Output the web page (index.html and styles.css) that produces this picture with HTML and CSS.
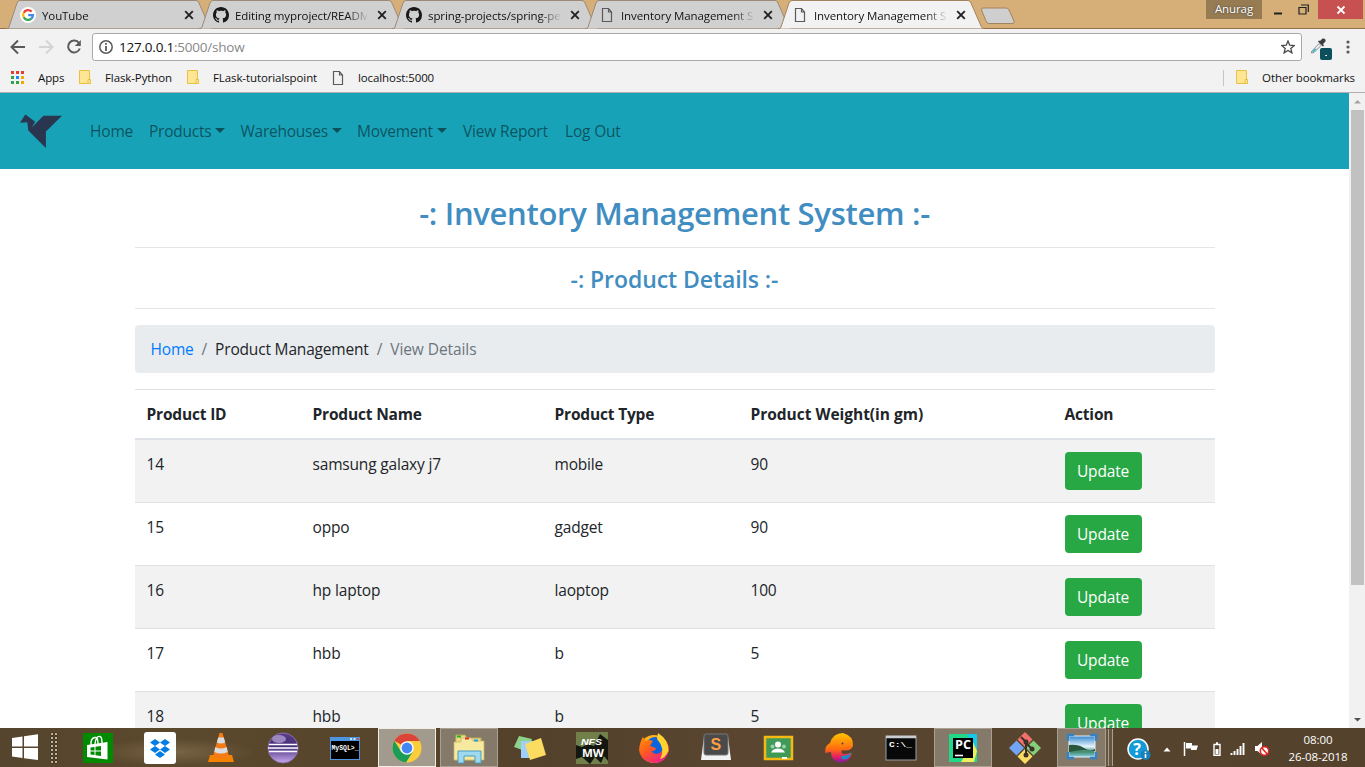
FILE: index.html
```html
<!DOCTYPE html>
<html lang="en">
<head>
<meta charset="utf-8">
<title>Inventory Management System</title>
<link rel="stylesheet" href="styles.css">
</head>
<body>
<svg class="defs" width="0" height="0">
  <defs>
    <symbol id="tabshape" viewBox="0 0 208 29"><path d="M0 28.5 H1 Q2.500 28.500 3 27 L11 3 Q12 .5 14 .5 H190 Q192 .5 193 3 L203 26 Q204 28.500 206 28.500"/></symbol>
    <symbol id="close" viewBox="0 0 10 10"><path d="M1.200 1.200 8.800 8.800 M8.800 1.200 1.200 8.800" fill="none" stroke="currentColor" stroke-width="1.900"/></symbol>
    <symbol id="page" viewBox="0 0 16 16"><path d="M3.500 1.500 H9.500 L12.500 5 V14.500 H3.500Z M9.500 1.500 V5 H12.500" fill="none" stroke="#5a5a5a" stroke-width="1.200"/></symbol>
    <symbol id="github" viewBox="0 0 16 16"><path fill="#191717" d="M8 0C3.580 0 0 3.580 0 8c0 3.540 2.290 6.530 5.470 7.590.4.070.55-.17.55-.38 0-.19-.01-.82-.01-1.490-2.010.37-2.530-.49-2.690-.94-.09-.23-.48-.94-.82-1.130-.28-.15-.68-.52-.01-.53.63-.01 1.080.58 1.230.82.72 1.210 1.870.87 2.330.66.070-.52.28-.87.51-1.070-1.780-.2-3.640-.89-3.640-3.950 0-.87.31-1.590.82-2.150-.08-.2-.36-1.020.08-2.120 0 0 .67-.21 2.200.82.64-.18 1.320-.27 2-.27s1.360.090 2 .27c1.530-1.040 2.200-.82 2.200-.82.44 1.100.16 1.920.08 2.120.51.56.82 1.270.82 2.150 0 3.070-1.870 3.750-3.650 3.950.29.25.54.73.54 1.480 0 1.070-.01 1.930-.01 2.200 0 .21.15.46.55.38A8.010 8.010 0 0 0 16 8c0-4.420-3.580-8-8-8z"/></symbol>
    <symbol id="folder" viewBox="0 0 13 15"><path d="M.5 .5H10.500V9.500H11.500V13.500H.5Z" fill="#ffe694" stroke="#e8c143"/><path d="M9 13.500V9.500H11.500" fill="none" stroke="#e8c143"/></symbol>
    <linearGradient id="purple" x2="0" y2="1"><stop stop-color="#5a3a85"/><stop offset=".45" stop-color="#47307a"/><stop offset="1" stop-color="#c9aaf0"/></linearGradient>
    <linearGradient id="fox" x2=".7" y2="1"><stop stop-color="#ff9a00"/><stop offset=".5" stop-color="#ff5a1f"/><stop offset="1" stop-color="#f01d8d"/></linearGradient>
    <linearGradient id="bow" x2="0" y2="1"><stop stop-color="#ffc400"/><stop offset=".55" stop-color="#ff6a10"/><stop offset=".8" stop-color="#e91e63"/><stop offset="1" stop-color="#7b1fa2"/></linearGradient>
    <linearGradient id="sky" x2="0" y2="1"><stop stop-color="#3585d0"/><stop offset=".5" stop-color="#e6f5fc"/><stop offset=".55" stop-color="#c5e3ec"/><stop offset=".75" stop-color="#3f8a68"/><stop offset="1" stop-color="#89cfe8"/></linearGradient>
  </defs>
</svg>

<div class="screen">
  <header class="tabstrip">
    <div class="tabs">
      <div class="tab"><svg class="shape"><use href="#tabshape"/></svg>
        <svg class="fav" viewBox="0 0 16 16"><circle cx="8" cy="8" r="8" fill="#fff"/><g fill="none" stroke-width="2.300"><path d="M11.600 4.600A4.900 4.900 0 0 0 3.700 5.700" stroke="#ea4335"/><path d="M3.700 5.700A4.900 4.900 0 0 0 3.700 10.300" stroke="#fbbc05"/><path d="M3.700 10.300A4.900 4.900 0 0 0 11.300 11.600" stroke="#34a853"/><path d="M11.300 11.600A4.900 4.900 0 0 0 12.900 8.100H8.200" stroke="#4285f4"/></g></svg>
        <span class="tab-title">YouTube</span><svg class="x"><use href="#close"/></svg></div>
      <div class="tab"><svg class="shape"><use href="#tabshape"/></svg><svg class="fav"><use href="#github"/></svg><span class="tab-title">Editing myproject/README</span><svg class="x"><use href="#close"/></svg></div>
      <div class="tab"><svg class="shape"><use href="#tabshape"/></svg><svg class="fav"><use href="#github"/></svg><span class="tab-title">spring-projects/spring-pet</span><svg class="x"><use href="#close"/></svg></div>
      <div class="tab"><svg class="shape"><use href="#tabshape"/></svg><svg class="fav"><use href="#page"/></svg><span class="tab-title">Inventory Management S</span><svg class="x"><use href="#close"/></svg></div>
      <div class="tab active"><svg class="shape"><use href="#tabshape"/></svg><svg class="fav"><use href="#page"/></svg><span class="tab-title">Inventory Management S</span><svg class="x"><use href="#close"/></svg></div>
    </div>
    <svg class="newtab" viewBox="0 0 36 18"><path d="M3 1H26Q28 1 29 3L34 14Q35 16.500 32 16.500H9Q7 16.500 6 14L1.500 3Q1 1 3 1Z" fill="#cfcfcf" stroke="#a3845f"/></svg>
    <div class="win">
      <span class="user">Anurag</span>
      <svg class="min" viewBox="0 0 10 10"><path d="M0 7.500H8" stroke="#222" stroke-width="2"/></svg>
      <svg class="max" viewBox="0 0 11 11"><path d="M1 3.500H8V10H1Z M3 1H10.300V8" fill="none" stroke="#222" stroke-width="1.200"/></svg>
      <span class="winclose"><svg viewBox="0 0 10 10"><path d="M1.500 1.500 8.500 8.500M8.500 1.500 1.500 8.500" stroke="#fff" stroke-width="1.800"/></svg></span>
    </div>
  </header>

  <div class="toolbar">
    <svg class="tool" viewBox="0 0 16 16"><path d="M15 8H2M8 1.500 1.500 8 8 14.500" fill="none" stroke="#5a5a5a" stroke-width="2"/></svg>
    <svg class="tool" viewBox="0 0 16 16"><path d="M1 8H14M8 1.500 14.500 8 8 14.500" fill="none" stroke="#d4d4d4" stroke-width="2"/></svg>
    <svg class="tool" viewBox="0 0 16 16"><path d="M13 4A6 6 0 1 0 13.800 9.500" fill="none" stroke="#5a5a5a" stroke-width="2"/><path d="M14.800 1V7H8.800Z" fill="#5a5a5a"/></svg>
    <div class="omnibox">
      <svg class="info" viewBox="0 0 14 14"><circle cx="7" cy="7" r="6.200" fill="none" stroke="#5a5a5a" stroke-width="1.500"/><path d="M7 6V11M7 3V4.800" stroke="#5a5a5a" stroke-width="1.800"/></svg>
      <span class="url">127.0.0.1<i>:5000/show</i></span>
      <svg class="star" viewBox="0 0 14 14"><path d="M7 1 8.700 5.200 13.200 5.500 9.800 8.400 10.900 12.900 7 10.400 3.100 12.900 4.200 8.400.8 5.500 5.300 5.200Z" fill="none" stroke="#4a4a4a" stroke-width="1.300"/></svg>
    </div>
    <svg class="picker" viewBox="0 0 22 22"><path d="M1.500 13.500 9 5.500 11 7.500 4 14.500 1.500 15Z" fill="#e8f2f2" stroke="#667" stroke-width=".7"/><path d="M2 13.500 5 10.500 7 11 3.500 14.500Z" fill="#41bccb"/><path d="M8 3.500 13 8.500 14 7.500 13 6 15.500 3.500Q16 0 12.500 .5L10 3 9 2.500Z" fill="#3d3d3d"/><rect x="10" y="10" width="12" height="12" rx="2" fill="#0d4f5c"/><path d="M15.300 17.500H17" stroke="#fff"/></svg>
    <svg class="kebab" viewBox="0 0 4 14"><g fill="#5a5a5a"><circle cx="2" cy="2" r="1.600"/><circle cx="2" cy="7" r="1.600"/><circle cx="2" cy="12" r="1.600"/></g></svg>
  </div>

  <div class="bookmarks">
    <svg class="apps" viewBox="0 0 13 13"><g><path d="M0 0h3v3h-3zM5 0h3v3h-3zM10 0h3v3h-3z" fill="#ea3b30"/><path d="M0 5h3v3h-3zM0 10h3v3h-3zM5 10h3v3h-3z" fill="#2da44e"/><path d="M5 5h3v3h-3z" fill="#1e88f7"/><path d="M10 5h3v3h-3zM10 10h3v3h-3z" fill="#f5a800"/></g></svg>
    <span class="bm b1">Apps</span>
    <svg class="fold"><use href="#folder"/></svg><span class="bm b2">Flask-Python</span>
    <svg class="fold"><use href="#folder"/></svg><span class="bm b3">FLask-tutorialspoint</span>
    <svg class="pg"><use href="#page"/></svg><span class="bm b4">localhost:5000</span>
    <span class="sep"></span>
    <svg class="fold"><use href="#folder"/></svg><span class="bm b5">Other bookmarks</span>
  </div>

  <div class="viewport">
    <div class="page">
      <nav class="navbar">
        <svg class="bird" viewBox="0 0 44 36"><path d="M0 9.500 5.500 1 15.500 8.500 12 14.500 24 2.500H43L26.500 18.500V35.500L8.500 17.500 7.500 9Z" fill="#2a3550"/></svg>
        <a class="n1">Home</a><a class="n2">Products<b class="caret"></b></a><a class="n3">Warehouses<b class="caret"></b></a><a class="n4">Movement<b class="caret"></b></a><a class="n5">View Report</a><a class="n6">Log Out</a>
      </nav>
      <main class="container">
        <h2>-: Inventory Management System :-</h2>
        <hr>
        <h4>-: Product Details :-</h4>
        <hr>
        <div class="breadcrumb"><a>Home</a><i>/</i><span>Product Management</span><i>/</i><em>View Details</em></div>
        <div class="table">
          <div class="tr th"><span>Product ID</span><span>Product Name</span><span>Product Type</span><span class="wide">Product Weight(in gm)</span><span>Action</span></div>
          <div class="tr odd"><span>14</span><span>samsung galaxy j7</span><span>mobile</span><span>90</span><span><button class="btn">Update</button></span></div>
          <div class="tr"><span>15</span><span>oppo</span><span>gadget</span><span>90</span><span><button class="btn">Update</button></span></div>
          <div class="tr odd"><span>16</span><span>hp laptop</span><span>laoptop</span><span>100</span><span><button class="btn">Update</button></span></div>
          <div class="tr"><span>17</span><span>hbb</span><span>b</span><span>5</span><span><button class="btn">Update</button></span></div>
          <div class="tr odd"><span>18</span><span>hbb</span><span>b</span><span>5</span><span><button class="btn">Update</button></span></div>
        </div>
      </main>
    </div>
    <div class="scrollbar">
      <svg viewBox="0 0 17 17"><path d="M5 10.500 8.500 7 12 10.500Z" fill="#a3a3a3"/></svg>
      <div class="thumb"></div>
      <svg class="down" viewBox="0 0 17 17"><path d="M5 7 8.500 10.500 12 7Z" fill="#505050"/></svg>
    </div>
  </div>

  <footer class="taskbar">
    <div class="start"><svg viewBox="0 0 28 26"><path d="M1 4 11.500 2.500V12.500H1ZM13 2.300 27 .3V12.500H13ZM1 14H11.500V24L1 22.500ZM13 14H27V26L13 24.200Z" fill="#fff"/></svg></div>
    <div class="grip"></div>
    <div class="apps-row">
      <div class="cell"><svg viewBox="0 0 32 32"><rect x="1" y="1" width="30" height="30" fill="#008a00"/><path d="M5 13 25.500 10V27.500L5 25Z" fill="#fff"/><path d="M9 13V10Q10 5 14 5.500Q16 6 16 12M13 12Q14 3.500 18 4.500Q20 5 20 11" fill="none" stroke="#fff" stroke-width="1.400"/><path d="M8.500 15.500 12.500 15V18.500H8.500ZM13.500 14.800 19 14V18.500H13.500ZM8.500 19.500H12.500V23L8.500 22.500ZM13.500 19.500H19V24L13.500 23.300Z" fill="#008a00"/></svg></div>
      <div class="cell"><svg viewBox="0 0 32 32"><rect width="32" height="32" rx="3" fill="#fff"/><path d="M11 7 16 10.500 11 14 6 10.500ZM21 7 26 10.500 21 14 16 10.500ZM11 14 16 17.500 11 21 6 17.500ZM21 14 26 17.500 21 21 16 17.500ZM16 19 21 22.500 16 26 11 22.500Z" fill="#007ee5"/></svg></div>
      <div class="cell"><svg viewBox="0 0 32 32"><path d="M5 23H27L29 30H3Z" fill="#f58200"/><path d="M14.500 1H17.500L24 24Q16 29 8 24Z" fill="#f47b16"/><path d="M13.200 5.500H18.800L20.200 10.500Q16 12.500 11.800 10.500ZM10.300 15Q16 18 21.700 15L22.700 20Q16 23 9.300 20Z" fill="#d9dde0"/></svg></div>
      <div class="cell"><svg viewBox="0 0 32 32"><circle cx="16" cy="16" r="15" fill="url(#purple)" stroke="#8a70ad"/><ellipse cx="12" cy="7" rx="7" ry="4" fill="#bca9dc" opacity=".7"/><path d="M2 12.500H30M1 16H31M2 19.500H30" stroke="#fff" stroke-width="1.300"/></svg></div>
      <div class="cell"><svg viewBox="0 0 32 32"><rect x="1" y="5" width="30" height="23" fill="#4c95e0"/><rect x="2" y="9" width="28" height="18" fill="#000"/><path d="M21 7H23M24.500 7H26.500" stroke="#cce4fa" stroke-width="2"/><path d="M28 7H30" stroke="#e04d32" stroke-width="2"/><text x="2.500" y="18" class="mono" textLength="27" lengthAdjust="spacingAndGlyphs" fill="#fff">MySQL&gt;_</text></svg></div>
      <div class="cell lit focus"><svg viewBox="0 0 32 32"><circle cx="16" cy="16" r="14.500" fill="#fbcd3a"/><path d="M16 16 3.400 8.800A14.500 14.500 0 0 1 28.800 9H16Z" fill="#dc4437"/><path d="M3.400 8.800A14.500 14.500 0 0 0 15 30.500L22 19.500 16 16 10 19.500Z" fill="#1b9d58"/><circle cx="16" cy="16" r="6.800" fill="#fff"/><circle cx="16" cy="16" r="5.400" fill="#4285f4"/></svg></div>
      <div class="cell lit"><svg viewBox="0 0 32 32"><path d="M3 3H12L14 6H28V28H2Z" fill="#eddb83" stroke="#b7a95b"/><path d="M8 6H18L20 9H31V28H1V10H8Z" fill="#f8e9a0" stroke="#c6b563" stroke-width=".7"/><path d="M4 4.500H8" stroke="#20b820" stroke-width="2"/><path d="M12 6.500H16" stroke="#d33" stroke-width="2"/><path d="M21 8.500H25" stroke="#249ce5" stroke-width="2"/><path d="M5 31V19H28V31H22V24H11V31Z" fill="#9ed9ef" stroke="#4b9dc3"/></svg></div>
      <div class="cell"><svg viewBox="0 0 32 32"><path d="M5 4 18 7 14 20 0 15Z" fill="#8bd48a"/><path d="M7 9H22V26H7Z" fill="#9fd0fb"/><path d="M11 12 27 6 32 23 16 28Z" fill="#fbdc60"/></svg></div>
      <div class="cell"><svg viewBox="0 0 32 32"><rect width="32" height="32" fill="#71804b"/><path d="M0 13 6 15 12 12 18 14 24 2 32 8V29L28 24 25 31 19 25 14 32 6 25 0 27Z" fill="#141710"/><text x="5" y="13" textLength="21" lengthAdjust="spacingAndGlyphs" class="nfs">NFS</text><text x="6" y="25" textLength="22" lengthAdjust="spacingAndGlyphs" class="mw">MW</text></svg></div>
      <div class="cell"><svg viewBox="0 0 32 32"><circle cx="16" cy="17" r="14" fill="#ffb21a"/><circle cx="17" cy="14" r="9" fill="#0a63df"/><path d="M5 5 8 9Q11 7 15 9L12 14 18 16Q17 20 13 19Q18 25 24 19Q28 14 21 3Q31 9 31 18Q28 31 16 31Q3 30 1 18Q2 9 5 5Z" fill="url(#fox)"/><path d="M20 1Q31 8 30.500 19Q27 26 22 27Q28 17 19 7Z" fill="#ffd22e"/></svg></div>
      <div class="cell"><svg viewBox="0 0 32 32"><path d="M4 5H28L31 28H1Z" fill="#f4f4f4"/><rect x="4" y="2" width="24" height="21" rx="2" fill="#4a4a4a" stroke="#777"/><text x="10.500" y="18" class="subl">S</text></svg></div>
      <div class="cell"><svg viewBox="0 0 32 32"><rect x="3" y="5" width="27" height="22" fill="#3f9a58" stroke="#f5b912" stroke-width="2.500"/><circle cx="16" cy="12.500" r="3" fill="#fff"/><path d="M9 20.500Q11 16.500 16 16.500T23 20.500Z" fill="#fff"/><circle cx="10.500" cy="14.500" r="2" fill="#9bd0a9"/><circle cx="22" cy="14.500" r="2" fill="#9bd0a9"/><path d="M20 26H25" stroke="#fff" stroke-width="2"/></svg></div>
      <div class="cell"><svg viewBox="0 0 32 32"><path d="M2 21Q2 13 7 11Q10 1 20 1Q31 4 30 14Q27 20 19 18Q17 22 22 22L29 21Q27 31 16 30.500Q8 29 8 20Z" fill="url(#bow)"/><path d="M18 24Q26 24 28 20V21Q26 29 19 27Z" fill="#168fcb"/><circle cx="19.500" cy="11.500" r=".9" fill="#444"/></svg></div>
      <div class="cell"><svg viewBox="0 0 32 32"><rect x="1" y="4" width="30" height="24" fill="#080808" stroke="#9aa0a7"/><path d="M1 5H31" stroke="#c9ccd1" stroke-width="2.500"/><text x="4" y="15" class="cmd" textLength="23" lengthAdjust="spacingAndGlyphs" fill="#fff">C:\_</text></svg></div>
      <div class="cell lit"><svg viewBox="0 0 32 32"><path d="M2 2H30V30H2Z" fill="#21d789"/><path d="M20 2H30V18L24 12Z" fill="#16c7e8"/><path d="M26 10 30 19 27 30H14Z" fill="#edf05a"/><rect x="6" y="6" width="20" height="20" fill="#000"/><text x="8" y="17" textLength="16" lengthAdjust="spacingAndGlyphs" class="pc">PC</text><path d="M8 23.500H16" stroke="#fff" stroke-width="1.600"/></svg></div>
      <div class="cell"><svg viewBox="0 0 32 32"><path d="M16 0 23.500 7.500 16 15 8.500 7.500Z" fill="#f4706b"/><path d="M7.500 8.500 15 16 7.500 23.500 0 16Z" fill="#73a5f7"/><path d="M24.500 8.500 32 16 24.500 23.500 17 16Z" fill="#84cf78"/><path d="M16 17 23.500 24.500 16 32 8.500 24.500Z" fill="#fbdc62"/><path d="M12 5 17 10V24M16 10 23 17" stroke="#3c302b" stroke-width="2" fill="none"/><g fill="#3c302b"><circle cx="17" cy="10" r="2.500"/><circle cx="23" cy="17" r="2.500"/><circle cx="17" cy="23" r="2.500"/></g></svg></div>
      <div class="cell lit pics"><svg viewBox="0 0 32 32"><rect x="3" y="4" width="26" height="21" fill="url(#sky)" stroke="#e6f2f7"/><path d="M3 13Q12 12 18 16T29 17V19Q15 17 3 20Z" fill="#28573d"/><path d="M2 9V3H8M24 3H30V9M30 20V26H24M8 26H2V20" fill="none" stroke="#3482c3" stroke-width="2.500"/></svg></div>
    </div>
    <div class="tray">
      <svg class="help" viewBox="0 0 24 22"><circle cx="11" cy="11" r="10" fill="#129bd7" stroke="#fff" stroke-width="1.500"/><text x="6.300" y="17" class="q">?</text><circle cx="18.500" cy="17" r="5" fill="#1681bd"/><path d="M18.500 16V20M18.500 13.500V15" stroke="#fff" stroke-width="1.600"/></svg>
      <svg class="up" viewBox="0 0 8 5"><path d="M4 .5 7.500 4.500H.5Z" fill="#fff"/></svg>
      <svg class="flag" viewBox="0 0 16 14"><path d="M1.500 0V14" stroke="#fff" stroke-width="1.500"/><path d="M3 1H9V3.500H15L13.500 8H8V6.500H3Z" fill="#fff"/></svg>
      <svg class="bat" viewBox="0 0 8 14"><path d="M1 2.500H7V13.200H1ZM3 1H5" stroke="#fff" stroke-width="1.400" fill="none"/><path d="M2.500 7H5.500V12H2.500Z" fill="#fff"/></svg>
      <svg class="sig" viewBox="0 0 16 12"><path d="M1.500 10V12M4.500 8V12M7.500 6V12M10.500 3V12M13.500 0V12" stroke="#fff" stroke-width="1.900"/></svg>
      <svg class="vol" viewBox="0 0 14 14"><path d="M0 4H2.500L7 0V13L2.500 9H0Z" fill="#fff"/><circle cx="9.500" cy="9" r="4.200" fill="#fff" stroke="#e32222" stroke-width="1.600"/><path d="M6.800 6 12.200 12" stroke="#e32222" stroke-width="1.600"/></svg>
      <div class="clock"><span>08:00</span><span class="date">26-08-2018</span></div>
    </div>
  </footer>
</div>
</body>
</html>
```

FILE: styles.css
```css
* { box-sizing: border-box; }
body { margin: 0; overflow: hidden; font-family: "Open Sans", "Noto Sans", sans-serif; }
svg { flex: none; display: block; }
.defs { position: absolute; }
i, em { font-style: normal; }
.screen { width: 1365px; height: 767px; display: flex; flex-direction: column; background: #fff; overflow: hidden; white-space: nowrap; }

.tabstrip { height: 29px; flex: none; display: flex; background: #d6ae78; border-bottom: 1px solid #93704a; }
.tabs { display: flex; padding-left: 6px; flex: none; height: 29px; }
.tab { position: relative; width: 193px; height: 29px; display: flex; align-items: center; padding: 1px 5px 0 14px; font-size: 11.5px; color: #111; letter-spacing: -.1px; }
.shape { position: absolute; left: 0; top: 0; width: 208px; height: 29px; fill: #d0d0d0; stroke: #9b8a78; stroke-width: 1; }
.active { z-index: 2; }
.active .shape { fill: #f2f2f2; stroke: #a3845f; }
.fav { position: relative; width: 16px; height: 16px; }
.tab-title { position: relative; width: 132px; margin-left: 6px; overflow: hidden; -webkit-mask-image: linear-gradient(90deg, #000 112px, transparent 134px); mask-image: linear-gradient(90deg, #000 112px, transparent 134px); }
.x { position: relative; width: 10px; height: 10px; margin-left: 10px; color: #222; }
.newtab { width: 36px; height: 18px; margin: 7px 0 0 9px; }
.win { margin-left: auto; display: flex; height: 19px; align-items: center; padding-right: 2px; }
.user { width: 56px; height: 19px; background: #967b53; color: #fff; font-size: 11.5px; letter-spacing: -.1px; line-height: 18px; text-align: center; text-shadow: 0 0 2px #333; }
.min { width: 10px; height: 10px; margin: 3px 0 0 12px; }
.max { width: 11px; height: 11px; margin-left: 14px; margin-top: -1px; }
.winclose { width: 45px; height: 19px; margin-left: 9px; background: #c75050; display: flex; align-items: center; justify-content: center; }
.winclose svg { width: 10px; height: 10px; }

.toolbar { height: 34px; flex: none; background: #f2f2f2; display: flex; align-items: center; padding-left: 10px; padding-top: 2px; }
.tool { width: 16px; height: 16px; margin-right: 12px; }
.omnibox { width: 1210px; height: 28px; margin-left: -2px; border: 1px solid #a9a9a9; border-radius: 3px; background: #fff; display: flex; align-items: center; padding: 0 6px; flex: none; }
.info { width: 14px; height: 14px; }
.url { margin-left: 6px; font-size: 13.5px; letter-spacing: -.22px; color: #111; }
.url i { color: #888; }
.star { width: 14px; height: 14px; margin-left: auto; }
.picker { width: 22px; height: 22px; margin: 3px 0 0 8px; }
.kebab { width: 4px; height: 14px; margin-left: 14px; }

.bookmarks { height: 30px; flex: none; background: #f2f2f2; border-bottom: 1px solid #b0aeb0; display: flex; align-items: center; padding: 0 10px 0 11px; font-size: 11.5px; letter-spacing: -.1px; color: #111; }
.apps { width: 13px; height: 13px; margin-right: 14px; }
.fold { width: 13px; height: 15px; margin-right: 13px; }
.pg { width: 16px; height: 16px; margin-right: 12px; }
.b1 { width: 41px; }
.b2 { width: 82px; }
.b3 { width: 117px; }
.sep { width: 1px; height: 16px; background: #c5c5c5; margin: 0 12px 0 auto; }

.viewport { height: 635px; flex: none; display: flex; overflow: hidden; }
.page { width: 1349px; height: 635px; overflow: hidden; font-size: 15.5px; line-height: 24px; color: #212529; letter-spacing: -.18px; }
.navbar { height: 76px; background: #17a2b8; display: flex; align-items: center; padding-left: 20px; color: rgba(0,0,0,.5); }
.bird { width: 43px; height: 36px; margin-right: 27px; }
.n1 { width: 59px; }
.n2 { width: 91.500px; }
.n3 { width: 116.500px; }
.n4 { width: 106px; }
.n5 { width: 102px; }
.caret { display: inline-block; margin-left: 4px; vertical-align: 4px; border: 5px solid transparent; border-top-color: currentColor; border-bottom: 0; }
.n2, .n3, .n4 { letter-spacing: -.25px; }
.container { width: 1080px; margin: 0 auto; padding-top: 26px; }
h2, h4 { margin: 0; text-align: center; color: #3f8dc1; font-weight: 600; line-height: 1.2; }
h2 { font-size: 31px; height: 38px; letter-spacing: -.3px; }
h4 { font-size: 23px; height: 29px; padding-top: 2px; letter-spacing: -.08px; }
hr { margin: 14px 0 16px; border: 0; border-top: 1px solid #e5e5e5; }
h4 + hr { margin: 15px 0 16px; }
.breadcrumb { height: 48px; border-radius: 4px; background: #e9ecef; padding: 12px 16px; display: flex; margin-bottom: 16px; color: #6c757d; }
.breadcrumb a { color: #007bff; }
.breadcrumb span { color: #212529; }
.breadcrumb i { margin: 0 8px; }
.breadcrumb em { letter-spacing: -.08px; }
.tr { display: grid; grid-template-columns: 166px 242px 196px 314px 162px; height: 63px; border-top: 1px solid #dee2e6; padding-top: 12px; }
.tr span { padding-left: 12px; }
.th { height: 50px; border-bottom: 1px solid #dee2e6; font-weight: 700; }
.th .wide { letter-spacing: -.02px; }
.odd { background: #f2f2f2; }
.btn { display: block; width: 77px; height: 38px; padding: 0; border: 0; border-radius: 4px; background: #28a745; color: #fff; font: inherit; letter-spacing: inherit; }

.scrollbar { width: 16px; height: 635px; background: #f1f1f1; display: flex; flex-direction: column; }
.scrollbar svg { width: 17px; height: 17px; }
.thumb { width: 13px; height: 475px; margin-left: 2px; background: #c1c1c1; }
.down { margin-top: auto; }

.taskbar { height: 39px; flex: none; display: flex; background: radial-gradient(ellipse 80px 14px at 175px 24px, #786343 0, transparent 100%), linear-gradient(90deg, #55452e, #5b492d 12%, #54412b 40%, #5a4630 55%, #54422c); color: #fff; }
.start { width: 50px; padding: 6px 0 0 11px; }
.start svg { width: 28px; height: 26px; }
.grip { width: 8px; height: 32px; margin-top: 4px; background: radial-gradient(circle, #c0b49e 0.800px, #2a2115 1.200px, transparent 1.800px) 0 0 / 4px 4px; }
.apps-row { display: flex; margin-left: 9px; flex: none; }
.cell { width: 61.800px; height: 39px; display: flex; justify-content: center; padding-top: 4px; }
.cell svg { width: 32px; height: 32px; }
.lit { width: 58px; margin: 0 1.900px; background: #857a69; border: 1px solid #aaa08f; padding-top: 3px; }
.focus { background: #a29a8d; border-color: #f3eee5; }
.pics { width: 49px; margin-left: 1.500px; margin-right: 0; box-shadow: 3px 0 0 -1px #65543f, 4px 0 0 -1px #aaa08f, 7px 0 0 -1px #65543f, 8px 0 0 -1px #aaa08f; }
.mono { font: 700 7px "Liberation Mono", monospace; letter-spacing: 0; }
.cmd { font: 700 8px "Liberation Mono", monospace; letter-spacing: 0; }
.nfs { font: italic 700 9px "Liberation Sans", sans-serif; fill: #fff; }
.mw { font: 700 11px "Open Sans", sans-serif; fill: #fff; }
.subl { font: 700 16px "Liberation Sans", sans-serif; fill: #ff9f45; }
.pc { font: 700 12px "Open Sans", sans-serif; fill: #fff; }
.q { font: 700 16px "Open Sans", sans-serif; fill: #fff; }
.tray { display: flex; align-items: center; margin-left: auto; padding-top: 3px; width: 238px; flex: none; }
.help { width: 24px; height: 22px; }
.up { width: 8px; height: 5px; margin-left: 12px; }
.flag { width: 16px; height: 14px; margin-left: 12px; }
.bat { width: 8px; height: 14px; margin-left: 14px; }
.sig { width: 16px; height: 12px; margin-left: 9px; }
.vol { width: 14px; height: 14px; margin-left: 9px; }
.clock { width: 74px; margin-left: 12px; display: flex; flex-direction: column; align-items: center; font-size: 11.500px; line-height: 17px; letter-spacing: -.1px; margin-top: -2px; }
```
